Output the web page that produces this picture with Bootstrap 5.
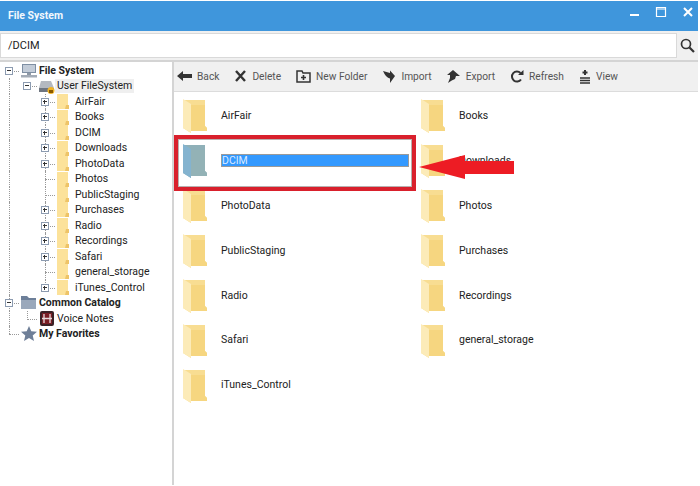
<!DOCTYPE html>
<html lang="en">
<head>
<meta charset="UTF-8">
<title>File System</title>
<link href="https://cdn.jsdelivr.net/npm/bootstrap@5.3.0/dist/css/bootstrap.min.css" rel="stylesheet">
<style>
  html, body { height: 100%; }
  body {
    background: #fff;
    font-family: Roboto, "Noto Sans", sans-serif;
    font-size: 10.5px;
    color: #222;
    overflow: hidden;
  }
  .app-window { width: 698px; height: 486px; position: relative; }
  .title-bar { height: 30px; margin-top: 1px; background: #3f96dc; color: #f2f8fd; font-weight: 700; font-size: 10.5px; padding: 0 4px 0 8px; }
  .win-btn { width: 12px; height: 12px; }
  .win-btns { gap: 15px; margin-top: -9px; }
  .addr-row { height: 29px; background: #f0f0f0; padding: 2px 0; }
  .addr-input { width: 677px; height: 25px; background: #fff; border: 1px solid #d9d9d9; padding: 0 7px; font-size: 11px; line-height: 23px; }
  .search-btn { width: 21px; }
  .main-area { height: 425px; border-top: 2px solid #d4d4d4; }
  .side-tree { width: 174px; flex: none; border-right: 2px solid #d4d4d4; padding-top: 1px; }
  .tree-row { height: 15.47px; line-height: 15.47px; white-space: nowrap; }
  .tree-cell { width: 18px; height: 100%; flex: none; position: relative; }
  .tree-line::before { content: ""; position: absolute; left: 9px; top: 0; bottom: 0; border-left: 1px dotted #999; }
  .tree-half::before { bottom: 50%; }
  .tree-dash::after { content: ""; position: absolute; left: 9px; right: -1px; top: 8px; border-top: 1px dotted #999; }
  .tree-toggle { position: absolute; left: 5px; top: 4px; width: 8px; height: 8px; background: #fff; border: 1px solid #8c9bb0; z-index: 1; }
  .tree-toggle::before { content: ""; position: absolute; left: 1px; right: 1px; top: 2px; border-top: 1px solid #333; }
  .toggle-plus::after { content: ""; position: absolute; top: 1px; bottom: 1px; left: 2px; border-left: 1px solid #333; }
  .tree-icon { flex: none; display: block; }
  .tree-label { padding: 0 2px; }
  .tree-bold { font-weight: 700; }
  .tree-sel { background: #efefef; height: 14px; line-height: 14px; }
  .tree-icon-root { width: 18px; margin-left: 2px; margin-right: -1px; }
  .tree-icon-folder { margin-left: 3px; margin-right: 4px; }
  .tool-bar { height: 30px; background: #f0f0f0; padding-left: 3px; border-bottom: 1px solid #dcdcdc; flex: none; }
  .tool-item { color: #555; font-size: 10.2px; margin-right: 15px; gap: 5px; }
  .folder-grid { display: grid; grid-template-columns: 238px 238px; grid-auto-rows: 44.9px; padding: 0.45px 0 0 9px; }
  .folder-item { gap: 14px; color: #222; height: 100%; padding-top: 2px; }
  .folder-icon { width: 24px; height: 35px; flex: none; }
  .rename-box { width: 188px; height: 13px; background: #3399ff; color: #dbeaff; border: 1px solid #9a9a9a; line-height: 11px; margin-top: -1px; }
  .mark-box { position: absolute; left: 174px; top: 134px; width: 242px; height: 56px; border: 4px solid #d9202c; box-shadow: inset 0 0 0 1px #b9b0b0; }
  .mark-arrow { position: absolute; left: 418px; top: 152px; }
</style>
</head>
<body>
<svg width="0" height="0" class="position-absolute">
  <defs>
    <symbol id="folder-yellow" viewBox="0 0 24 35">
      <path d="M0 2H22V28L24 30V33H8V35L0 30Z" fill="#f8dd92"/>
      <path d="M8 7H22V28L24 30V33H8Z" fill="#f6d680"/>
      <path d="M0 1L8 6V35L0 30Z" fill="#fcebb8"/>
    </symbol>
    <symbol id="folder-selected" viewBox="0 0 24 35">
      <path d="M0 2H22V28L24 30V33H8V35L0 30Z" fill="#8fb0b8"/>
      <path d="M8 7H22V28L24 30V33H8Z" fill="#93b2b6"/>
      <path d="M0 1L8 6V35L0 30Z" fill="#84b3cf"/>
    </symbol>
    <symbol id="folder-small" viewBox="0 0 12 15">
      <path d="M0 0H11V11L12 12V15H0Z" fill="#fce29a"/>
      <path d="M9 11H12V15H8Z" fill="#eec468"/>
    </symbol>
  </defs>
</svg>
<div class="app-window">
  <div class="title-bar d-flex align-items-center justify-content-between">
    <span>File System</span>
    <div class="win-btns d-flex align-items-center">
      <svg class="win-btn" viewBox="0 0 12 12"><path d="M2 9H11" stroke="#fff" stroke-width="2"/></svg>
      <svg class="win-btn" viewBox="0 0 12 12"><path d="M1.5 1.5H10.5V10.5H1.5Z M1.5 3H10.5" fill="none" stroke="#fff" stroke-width="1.2"/></svg>
      <svg class="win-btn" viewBox="0 0 12 12"><path d="M2 2L10 10M10 2L2 10" stroke="#fff" stroke-width="2"/></svg>
    </div>
  </div>

  <div class="addr-row d-flex">
    <div class="addr-input">/DCIM</div>
    <div class="search-btn d-flex align-items-center justify-content-center">
      <svg width="15" height="15" viewBox="0 0 15 15"><circle cx="6" cy="6" r="4.5" fill="none" stroke="#333" stroke-width="1.7"/><path d="M9.5 9.5L14 14" stroke="#333" stroke-width="2.2"/></svg>
    </div>
  </div>

  <div class="main-area d-flex">
    <div class="side-tree" id="tree"></div>
    <div class="flex-grow-1 d-flex flex-column">
      <div class="tool-bar d-flex align-items-center">
        <div class="tool-item d-flex align-items-center">
          <svg width="15" height="12" viewBox="0 0 15 12"><path d="M0 6L6 1V4H15V8H6V11Z" fill="#333"/></svg>Back
        </div>
        <div class="tool-item d-flex align-items-center">
          <svg width="13" height="12" viewBox="0 0 13 12"><path d="M2 1L11 11M11 1L2 11" stroke="#333" stroke-width="2.4"/></svg>Delete
        </div>
        <div class="tool-item d-flex align-items-center">
          <svg width="15" height="13" viewBox="0 0 15 13"><path d="M1 1H6L7 3H14V12H1Z" fill="none" stroke="#333" stroke-width="1.5"/><path d="M7.5 5V10M5 7.5H10" stroke="#333" stroke-width="1.6"/></svg>New Folder
        </div>
        <div class="tool-item d-flex align-items-center">
          <svg width="14" height="13" viewBox="0 0 14 13"><path d="M1 1L8 3V0.5L13 6L8 13V8.5Q4 8 1 1Z" fill="#333"/></svg>Import
        </div>
        <div class="tool-item d-flex align-items-center">
          <svg width="14" height="13" viewBox="0 0 14 13"><path d="M1 13L3 8V5H0L6 0L13 6H9L8 9Q5 10 1 13Z" fill="#333"/></svg>Export
        </div>
        <div class="tool-item d-flex align-items-center">
          <svg width="14" height="13" viewBox="0 0 14 13"><path d="M11 9.5A5 5 0 1 1 10.5 3" fill="none" stroke="#333" stroke-width="2"/><path d="M8 5H13.5V0Z" fill="#333"/></svg>Refresh
        </div>
        <div class="tool-item d-flex align-items-center">
          <svg width="12" height="15" viewBox="0 0 12 15"><path d="M1 9H11M1 11.5H11M1 14H11" stroke="#333" stroke-width="1.6"/><path d="M3.5 3.5H8.5M6 1V6" stroke="#333" stroke-width="2"/></svg>View
        </div>
      </div>
      <div class="folder-grid" id="grid"></div>
    </div>
  </div>

  <div class="mark-box"></div>
  <svg class="mark-arrow" width="97" height="28" viewBox="0 0 97 28">
    <path d="M1 14L47 2V8H96V21H47V26Z" fill="#ed1c24"/>
  </svg>
</div>

<script src="https://cdn.jsdelivr.net/npm/bootstrap@5.3.0/dist/js/bootstrap.bundle.min.js"></script>
<script>
  const children = [
    ['AirFair', 1], ['Books', 1], ['DCIM', 1], ['Downloads', 1], ['PhotoData', 1], ['Photos', 0],
    ['PublicStaging', 0], ['Purchases', 1], ['Radio', 1], ['Recordings', 1], ['Safari', 1],
    ['general_storage', 0], ['iTunes_Control', 1]
  ];
  const monitorIcon = '<svg class="tree-icon tree-icon-root" height="15" viewBox="0 0 18 15"><rect x="2" y="1" width="14" height="9" fill="#7f8fa3"/><rect x="3" y="2" width="12" height="7" fill="#c3ccd8"/><rect x="7" y="10" width="4" height="2" fill="#8e98a5"/><rect x="1" y="12" width="16" height="2.5" fill="#a3abb6"/></svg>';
  const driveIcon = '<svg class="tree-icon tree-icon-root" height="15" viewBox="0 0 18 15"><path d="M3 2H13L16 9V13H1V9Z" fill="#b4b9c0"/><rect x="1" y="9" width="15" height="4" fill="#6f7680"/><circle cx="13" cy="11.5" r="3.5" fill="#f0b429"/><rect x="11" y="11" width="4" height="3" fill="#8a5a00"/></svg>';
  const catalogIcon = '<svg class="tree-icon tree-icon-root" height="15" viewBox="0 0 18 15"><path d="M1 1H7L9 3H16V14H1Z" fill="#6d7f99"/><rect x="1" y="5" width="15" height="9" fill="#9aa8bb"/></svg>';
  const notesIcon = '<svg class="tree-icon tree-icon-root" height="15" viewBox="0 0 16 15"><rect x="1" y="0" width="14" height="15" rx="2" fill="#3a2226"/><rect x="3" y="2" width="10" height="11" fill="#7a1f26"/><path d="M5 3V12M11 3V12M3 7.5H13" stroke="#e8dcdc" stroke-width="1.3"/></svg>';
  const starIcon = '<svg class="tree-icon tree-icon-root" height="15" viewBox="0 0 18 15"><path d="M9 0L11.3 5.2L17 5.7L12.7 9.4L14 15L9 12L4 15L5.3 9.4L1 5.7L6.7 5.2Z" fill="#6f7f98"/></svg>';

  function cell(line, dash, toggle, half) {
    let cls = 'tree-cell';
    if (line) cls += ' tree-line';
    if (half) cls += ' tree-line tree-half';
    if (dash) cls += ' tree-dash';
    let inner = '';
    if (toggle === 'minus') inner = '<span class="tree-toggle"></span>';
    if (toggle === 'plus') inner = '<span class="tree-toggle toggle-plus"></span>';
    return '<div class="' + cls + '">' + inner + '</div>';
  }
  function row(cells, icon, label, labelCls) {
    return '<div class="tree-row d-flex align-items-center">' + cells + icon +
      '<span class="tree-label ' + (labelCls || '') + '">' + label + '</span></div>';
  }

  let html = row(cell(false, true, 'minus'), monitorIcon, 'File System', 'tree-bold');
  html += row(cell(true) + cell(false, true, 'minus'), driveIcon, 'User FileSystem', 'tree-sel');
  children.forEach(function (c, i) {
    const last = i === children.length - 1;
    const folder = '<svg class="tree-icon tree-icon-folder" width="12" height="15"><use href="#folder-small"/></svg>';
    html += row(cell(true) + cell(false) + cell(!last, true, c[1] ? 'plus' : '', last), folder, c[0]);
  });
  html += row(cell(true, true, 'minus'), catalogIcon, 'Common Catalog', 'tree-bold');
  html += row(cell(true) + cell(false, true, '', true), notesIcon, 'Voice Notes');
  html += row(cell(false, true, '', true), starIcon, 'My Favorites', 'tree-bold');
  document.getElementById('tree').innerHTML = html;

  const folders = ['AirFair', 'Books', 'DCIM', 'Downloads', 'PhotoData', 'Photos', 'PublicStaging',
    'Purchases', 'Radio', 'Recordings', 'Safari', 'general_storage', 'iTunes_Control'];
  document.getElementById('grid').innerHTML = folders.map(function (name) {
    const sel = name === 'DCIM';
    const icon = '<svg class="folder-icon"><use href="#' + (sel ? 'folder-selected' : 'folder-yellow') + '"/></svg>';
    const label = sel ? '<div class="rename-box">DCIM</div>' : '<span>' + name + '</span>';
    return '<div class="folder-item d-flex align-items-center">' + icon + label + '</div>';
  }).join('');
</script>
</body>
</html>
